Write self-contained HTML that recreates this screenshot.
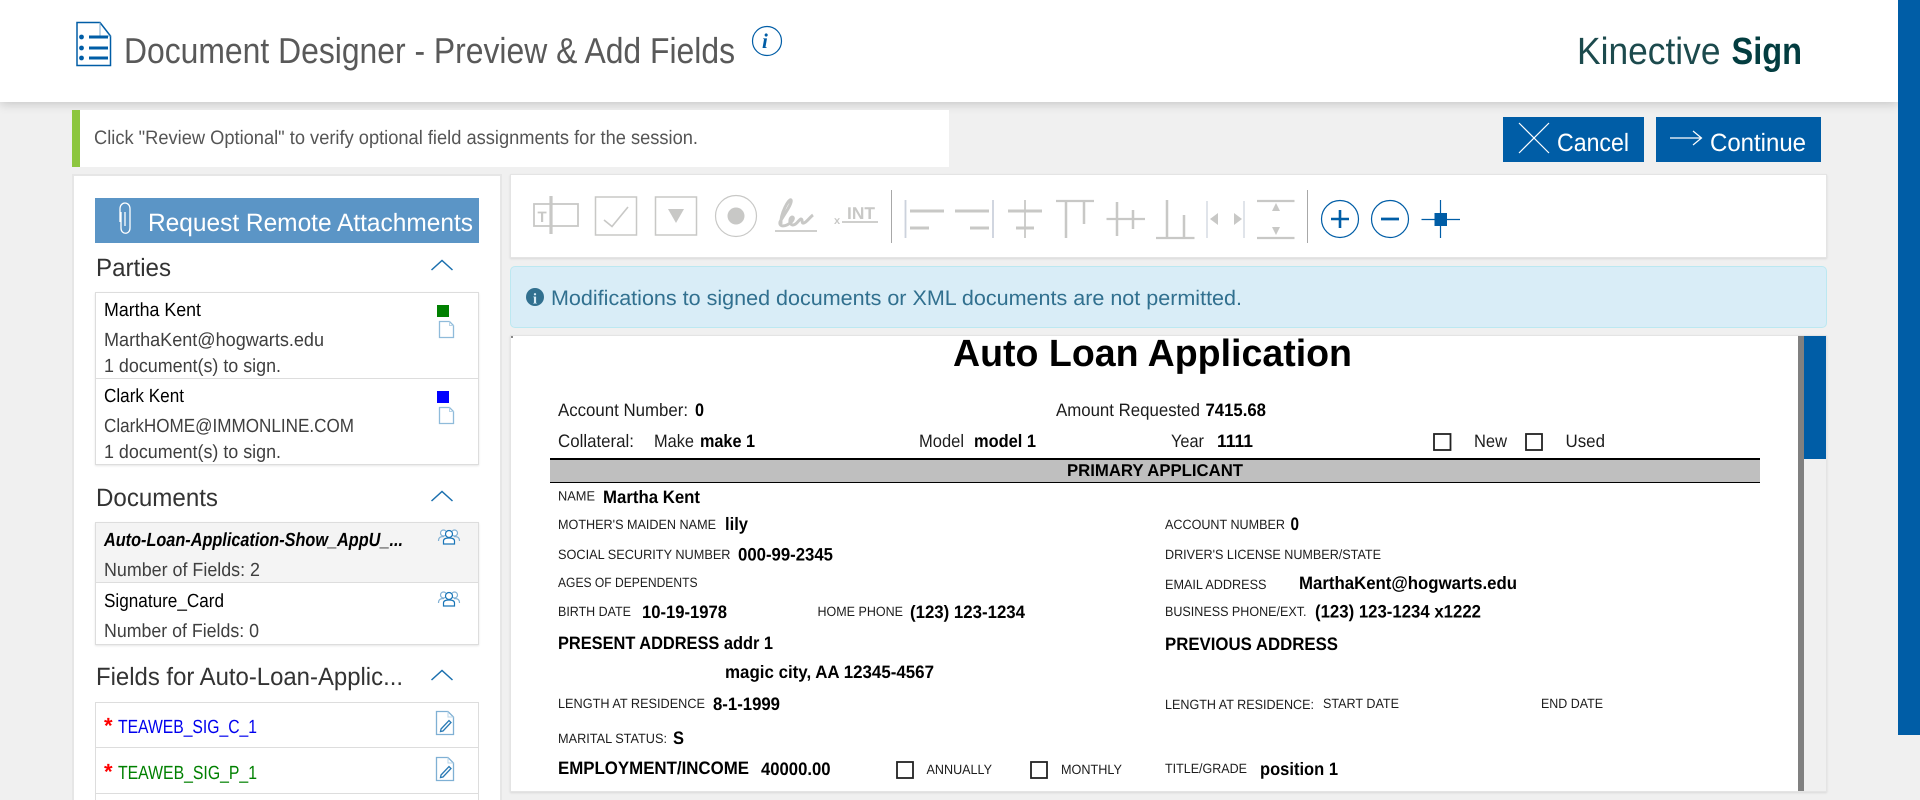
<!DOCTYPE html>
<html lang="en">
<head>
<meta charset="utf-8">
<title>Document Designer - Preview &amp; Add Fields</title>
<style>
html,body{margin:0;padding:0;width:1920px;height:800px;overflow:hidden;background:#f0f0f0;font-family:"Liberation Sans",sans-serif}
#page{position:relative;width:1920px;height:800px;overflow:hidden}
.b{position:absolute;box-sizing:border-box}
svg{position:absolute;left:0;top:0;text-rendering:geometricPrecision}
text{font-family:"Liberation Sans",sans-serif}
.r{font-size:19px;fill:#3f3f3f}
.n{font-size:19px;fill:#000}
.h{font-size:25px;fill:#333}
.l{font-size:18px;fill:#1c1c1c}
.v{font-size:18px;fill:#000;font-weight:bold}
.s{font-size:13.5px;fill:#1c1c1c}
.m{font-size:18px;fill:#000;font-weight:bold}
</style>
</head>
<body>
<div id="page">
<div class="b" style="left:0;top:0;width:1898px;height:102px;background:#fff;box-shadow:0 2px 10px rgba(0,0,0,.18)"></div>
<div class="b" style="left:1898px;top:0;width:22px;height:735px;background:#005da6"></div>
<div class="b" style="left:72px;top:110px;width:877px;height:57px;background:#fff;border-left:8px solid #8cc63f"></div>
<div class="b" style="left:1503px;top:117px;width:141px;height:45px;background:#005da6"></div>
<div class="b" style="left:1656px;top:117px;width:165px;height:45px;background:#005da6"></div>
<div class="b" style="left:72px;top:174px;width:430px;height:626px;background:#fff;border:2px solid #e6e6e6;border-bottom:0"></div>
<div class="b" style="left:95px;top:198px;width:384px;height:45px;background:#5b95c6"></div>
<div class="b" style="left:510px;top:174px;width:1317px;height:84px;background:#fff;border:1px solid #e4e4e4;box-shadow:0 1px 2px rgba(0,0,0,.1)"></div>
<div class="b" style="left:510px;top:266px;width:1317px;height:62px;background:#d9edf7;border:1px solid #bce8f1;border-radius:5px"></div>
<div class="b" style="left:510px;top:335px;width:1317px;height:457px;background:#fff;border:1px solid #e4e4e4;box-shadow:0 1px 2px rgba(0,0,0,.1)"></div>
<div class="b" style="left:1798px;top:336px;width:6px;height:455px;background:#808080"></div>
<div class="b" style="left:1804px;top:336px;width:22px;height:455px;background:#f0f0f0"></div>
<div class="b" style="left:1804px;top:336px;width:22px;height:123px;background:#005da6"></div>
<div class="b" style="left:511px;top:336px;width:2px;height:2px;background:#888"></div>
<div class="b" style="left:95px;top:292px;width:384px;height:173px;background:#fff;border:1.5px solid #ddd;box-shadow:0 1px 2px rgba(0,0,0,.1)"></div>
<div class="b" style="left:96px;top:378px;width:382px;height:1px;background:#ddd"></div>
<div class="b" style="left:95px;top:522px;width:384px;height:123px;background:#fff;border:1.5px solid #ddd;box-shadow:0 1px 2px rgba(0,0,0,.1)"></div>
<div class="b" style="left:96px;top:523px;width:382px;height:60px;background:#f4f4f4;border-bottom:1px solid #ddd"></div>
<div class="b" style="left:95px;top:702px;width:384px;height:98px;background:#fff;border:1.5px solid #ddd;border-bottom:0"></div>
<div class="b" style="left:96px;top:747px;width:382px;height:1px;background:#ddd"></div>
<div class="b" style="left:96px;top:793px;width:382px;height:1px;background:#ddd"></div>
<div class="b" style="left:437px;top:305px;width:12px;height:12px;background:#008000"></div>
<div class="b" style="left:437px;top:391px;width:12px;height:12px;background:#00f"></div>
<div class="b" style="left:550px;top:458px;width:1210px;height:25px;background:#bfbfbf;border-top:2px solid #000;border-bottom:1.5px solid #000"></div>

<svg width="1920" height="800" viewBox="0 0 1920 800" xmlns="http://www.w3.org/2000/svg">
<!-- header -->
<g fill="none" stroke="#005da6">
<path d="M77 22.500H100L110.500 36V65.500H77Z" stroke-width="1.500"/>
<path d="M100 22.500V36H110.500" stroke-width="1" stroke="#7aa9cf"/>
<path d="M89 37H108M89 48H108M89 58H108" stroke-width="3"/>
<circle cx="767" cy="41" r="14.500" stroke-width="1.200"/>
</g>
<g fill="#005da6"><circle cx="81.500" cy="37" r="2.400"/><circle cx="81.500" cy="48" r="2.400"/><circle cx="81.500" cy="58" r="2.400"/></g>
<text x="762" y="48" style="font-family:'Liberation Serif',serif;font-style:italic;font-weight:bold;font-size:21px" fill="#005da6">i</text>
<text x="124" y="63" font-size="36" fill="#595959" textLength="611" lengthAdjust="spacingAndGlyphs">Document Designer - Preview &amp; Add Fields</text>
<text x="1577" y="64" font-size="38" fill="#1c4a4d" textLength="143.500" lengthAdjust="spacingAndGlyphs">Kinective</text>
<text x="1731.500" y="64" font-size="38" font-weight="bold" fill="#033d40" textLength="70.500" lengthAdjust="spacingAndGlyphs">Sign</text>

<!-- notice and buttons -->
<text x="94" y="144" font-size="19.500" fill="#555" textLength="604" lengthAdjust="spacingAndGlyphs">Click "Review Optional" to verify optional field assignments for the session.</text>
<path d="M1519 123L1549 153M1549 123L1519 153" stroke="#fff" stroke-width="1.200" fill="none"/>
<text x="1557" y="151" font-size="25" fill="#fff" textLength="72" lengthAdjust="spacingAndGlyphs">Cancel</text>
<path d="M1670 138H1701M1693 131L1701.500 138L1693 145" stroke="#fff" stroke-width="1.200" fill="none"/>
<text x="1710" y="151" font-size="25" fill="#fff" textLength="96" lengthAdjust="spacingAndGlyphs">Continue</text>

<!-- left panel -->
<path d="M121 212V228C121 235 130 235 130 228V209C130 201 120 201 120 209V222M125 212V226" stroke="#fff" stroke-width="1.300" fill="none"/>
<text x="148" y="231" font-size="25" fill="#fff" textLength="325" lengthAdjust="spacingAndGlyphs">Request Remote Attachments</text>

<text class="h" x="96" y="276" textLength="75" lengthAdjust="spacingAndGlyphs">Parties</text>
<path d="M431.500 270L442 260.500L452.500 270" stroke="#1a6fae" stroke-width="1.500" fill="none"/>
<text class="n" x="104" y="316" textLength="97" lengthAdjust="spacingAndGlyphs">Martha Kent</text>
<text class="r" x="104" y="346" textLength="220" lengthAdjust="spacingAndGlyphs">MarthaKent@hogwarts.edu</text>
<text class="r" x="104" y="372" textLength="177" lengthAdjust="spacingAndGlyphs">1 document(s) to sign.</text>
<path d="M439.500 321.500H449.500L453.500 325.500V337.500H439.500Z" fill="#fff" stroke="#8fbbda" stroke-width="1.300"/>
<path d="M449.500 321.500V325.500H453.500" fill="none" stroke="#b8d4e8" stroke-width="1"/>
<text class="n" x="104" y="402" textLength="80" lengthAdjust="spacingAndGlyphs">Clark Kent</text>
<text class="r" x="104" y="432" textLength="250" lengthAdjust="spacingAndGlyphs">ClarkHOME@IMMONLINE.COM</text>
<text class="r" x="104" y="458" textLength="177" lengthAdjust="spacingAndGlyphs">1 document(s) to sign.</text>
<path d="M439.500 407.500H449.500L453.500 411.500V423.500H439.500Z" fill="#fff" stroke="#8fbbda" stroke-width="1.300"/>
<path d="M449.500 407.500V411.500H453.500" fill="none" stroke="#b8d4e8" stroke-width="1"/>

<text class="h" x="96" y="506" textLength="122" lengthAdjust="spacingAndGlyphs">Documents</text>
<path d="M431.500 501L442 491.500L452.500 501" stroke="#1a6fae" stroke-width="1.500" fill="none"/>
<text x="104" y="546" font-size="19" font-weight="bold" font-style="italic" fill="#000" textLength="299" lengthAdjust="spacingAndGlyphs">Auto-Loan-Application-Show_AppU_...</text>
<text class="r" x="104" y="576" textLength="156" lengthAdjust="spacingAndGlyphs">Number of Fields: 2</text>
<text class="n" x="104" y="607" textLength="120" lengthAdjust="spacingAndGlyphs">Signature_Card</text>
<text class="r" x="104" y="637" textLength="155" lengthAdjust="spacingAndGlyphs">Number of Fields: 0</text>
<g fill="#fff" stroke-width="1.200">
<g stroke="#7fb0d4"><circle cx="443.500" cy="533" r="3"/><circle cx="454.500" cy="533" r="3"/><path d="M438.500 541C438.500 537 441 536.500 444 536.500M459.500 541C459.500 537 457 536.500 454 536.500" fill="none"/></g>
<g stroke="#1a76b8"><circle cx="449" cy="534" r="3.500"/><path d="M443.500 544V541C443.500 538.500 446 538 449 538C452 538 454.500 538.500 454.500 541V544Z"/></g>
<g stroke="#7fb0d4"><circle cx="443.500" cy="595" r="3"/><circle cx="454.500" cy="595" r="3"/><path d="M438.500 603C438.500 599 441 598.500 444 598.500M459.500 603C459.500 599 457 598.500 454 598.500" fill="none"/></g>
<g stroke="#1a76b8"><circle cx="449" cy="596" r="3.500"/><path d="M443.500 606V603C443.500 600.500 446 600 449 600C452 600 454.500 600.500 454.500 603V606Z"/></g>
</g>

<text class="h" x="96" y="685" textLength="307" lengthAdjust="spacingAndGlyphs">Fields for Auto-Loan-Applic...</text>
<path d="M431.500 680L442 670.500L452.500 680" stroke="#1a6fae" stroke-width="1.500" fill="none"/>
<text x="104" y="733" font-size="22" font-weight="bold" fill="#f00">*</text>
<text x="118" y="733" font-size="19" fill="#0000ee" textLength="139" lengthAdjust="spacingAndGlyphs">TEAWEB_SIG_C_1</text>
<text x="104" y="779" font-size="22" font-weight="bold" fill="#f00">*</text>
<text x="118" y="779" font-size="19" fill="#008000" textLength="139" lengthAdjust="spacingAndGlyphs">TEAWEB_SIG_P_1</text>
<g fill="none">
<path d="M436.500 711.500H448L453.500 717V734.500H436.500Z" stroke="#7fb0d4" stroke-width="1.300"/><path d="M448 711.500V717H453.500" stroke="#b8d4e8"/>
<path d="M441 729L449 720.500L451 722.500L443 731L440.500 731.500Z" stroke="#2a7ab5" stroke-width="1.300"/>
<path d="M436.500 757.500H448L453.500 763V780.500H436.500Z" stroke="#7fb0d4" stroke-width="1.300"/><path d="M448 757.500V763H453.500" stroke="#b8d4e8"/>
<path d="M441 775L449 766.500L451 768.500L443 777L440.500 777.500Z" stroke="#2a7ab5" stroke-width="1.300"/>
</g>

<!-- toolbar -->
<g fill="none" stroke="#c8c8c6">
<rect x="534" y="204" width="44" height="22" stroke-width="1.800"/>
<path d="M551 196V234" stroke-width="3.200"/>
<rect x="595.500" y="197" width="41" height="38" stroke-width="1.500"/>
<path d="M604 220L612 226.500L628 207" stroke-width="1.600"/>
<rect x="655.500" y="197" width="41" height="38" stroke-width="1.500"/>
<circle cx="736" cy="216" r="20.500" stroke-width="1.200"/>
<path d="M781 224C780 214 789 198 791 200C793 203 783 216 780 222C779 227 785 227 790 223C794 220 794 217 792 217C789 218 789 225 793 225C797 225 799 219 801 219C803 219 801 224 804 223C807 222 810 217 813 215" stroke-width="3"/>
<path d="M775 231H817" stroke-width="1.800"/>
<path d="M842 222H878" stroke-width="1.800"/>
<path d="M905.500 200V238M993 200V238" stroke="#ccd2dc" stroke-width="1.800"/>
<path d="M910 211H944M910 228H929M955 211H989M970 228H989M1008 211H1042M1016 228H1034" stroke-width="3"/>
<path d="M1025 200V238" stroke-width="1.800"/>
<path d="M1056 201H1094M1106.500 219H1145M1156 238H1194.500M1257 201H1294.500M1257 238H1294.500" stroke-width="2.200"/>
<path d="M1066 201V238M1084 201V224M1117 202V236M1133 210V229M1167 200V238M1184 215V238" stroke-width="2.500"/>
<path d="M1207 201V238M1244 201V238" stroke="#ccd2dc" stroke-width="1.200"/>
</g>
<g fill="#c8c8c6">
<text x="537.500" y="222" font-size="15" font-weight="bold" fill="#c8c8c6">T</text>
<path d="M668 209H684L676 223Z"/>
<circle cx="736" cy="216" r="8.500"/>
<text x="834" y="224" font-size="11" font-weight="bold" fill="#c8c8c6">x</text>
<text x="847" y="219" font-size="17" font-weight="bold" fill="#c8c8c6" textLength="28" lengthAdjust="spacingAndGlyphs">INT</text>
<path d="M1218 213V225L1210 219ZM1234 213V225L1242 219ZM1276 203L1280 211H1272ZM1276 235L1280 227H1272Z"/>
</g>
<path d="M891.500 190V243M1307.500 190V243" stroke="#a8a8a8" stroke-width="1"/>
<g fill="none" stroke="#005da6">
<ellipse cx="1340" cy="219" rx="18.500" ry="18.500" stroke-width="1.200"/>
<path d="M1331 219H1349M1340 210V228" stroke-width="2.600"/>
<ellipse cx="1390" cy="219" rx="18.500" ry="18.500" stroke-width="1.200"/>
<path d="M1381 219H1399" stroke-width="2.800"/>
<path d="M1421.500 219.500H1460M1440.500 200V238" stroke-width="1.200"/>
</g>
<rect x="1434.500" y="213" width="12.500" height="13" fill="#005da6"/>

<!-- alert -->
<circle cx="535" cy="297" r="9" fill="#31708f"/>
<text x="535" y="303.500" text-anchor="middle" font-size="15" font-weight="bold" fill="#d9edf7" style="font-family:'Liberation Serif',serif">i</text>
<text x="551" y="305" font-size="21" fill="#31708f" textLength="691" lengthAdjust="spacingAndGlyphs">Modifications to signed documents or XML documents are not permitted.</text>

<!-- document -->
<text x="953" y="366" font-size="38" font-weight="bold" fill="#000" textLength="399" lengthAdjust="spacingAndGlyphs">Auto Loan Application</text>
<text class="l" x="558" y="416" textLength="130" lengthAdjust="spacingAndGlyphs">Account Number:</text>
<text class="v" x="695" y="416" textLength="9" lengthAdjust="spacingAndGlyphs">0</text>
<text class="l" x="1056" y="416" textLength="144" lengthAdjust="spacingAndGlyphs">Amount Requested</text>
<text class="v" x="1205.500" y="416" textLength="60.500" lengthAdjust="spacingAndGlyphs">7415.68</text>
<text class="l" x="558" y="447" textLength="76" lengthAdjust="spacingAndGlyphs">Collateral:</text>
<text class="l" x="654" y="447" textLength="40" lengthAdjust="spacingAndGlyphs">Make</text>
<text class="v" x="700" y="447" textLength="55" lengthAdjust="spacingAndGlyphs">make 1</text>
<text class="l" x="919" y="447" textLength="45" lengthAdjust="spacingAndGlyphs">Model</text>
<text class="v" x="974" y="447" textLength="62" lengthAdjust="spacingAndGlyphs">model 1</text>
<text class="l" x="1171" y="447" textLength="33" lengthAdjust="spacingAndGlyphs">Year</text>
<text class="v" x="1217" y="447" textLength="36" lengthAdjust="spacingAndGlyphs">1111</text>
<rect x="1434" y="434" width="16.500" height="16" fill="none" stroke="#222" stroke-width="1.800"/>
<text class="l" x="1474" y="447" textLength="33" lengthAdjust="spacingAndGlyphs">New</text>
<rect x="1526" y="434" width="16" height="16" fill="none" stroke="#222" stroke-width="1.800"/>
<text class="l" x="1565.500" y="447" textLength="39.500" lengthAdjust="spacingAndGlyphs">Used</text>
<text x="1067" y="476" font-size="17" font-weight="bold" fill="#000" textLength="176" lengthAdjust="spacingAndGlyphs">PRIMARY APPLICANT</text>

<text class="s" x="558" y="500.500" textLength="37" lengthAdjust="spacingAndGlyphs">NAME</text>
<text class="v" x="603" y="503" textLength="97" lengthAdjust="spacingAndGlyphs">Martha Kent</text>
<text class="s" x="558" y="529" textLength="158" lengthAdjust="spacingAndGlyphs">MOTHER'S MAIDEN NAME</text>
<text class="v" x="725" y="530" textLength="23" lengthAdjust="spacingAndGlyphs">lily</text>
<text class="s" x="1165" y="529" textLength="120" lengthAdjust="spacingAndGlyphs">ACCOUNT NUMBER</text>
<text class="v" x="1290.500" y="530" textLength="8.500" lengthAdjust="spacingAndGlyphs">0</text>
<text class="s" x="558" y="559" textLength="172.500" lengthAdjust="spacingAndGlyphs">SOCIAL SECURITY NUMBER</text>
<text class="v" x="738" y="560.500" textLength="95" lengthAdjust="spacingAndGlyphs">000-99-2345</text>
<text class="s" x="1165" y="559" textLength="216" lengthAdjust="spacingAndGlyphs">DRIVER'S LICENSE NUMBER/STATE</text>
<text class="s" x="558" y="587" textLength="139.500" lengthAdjust="spacingAndGlyphs">AGES OF DEPENDENTS</text>
<text class="s" x="1165" y="589" textLength="101.500" lengthAdjust="spacingAndGlyphs">EMAIL ADDRESS</text>
<text class="v" x="1299" y="589" textLength="218" lengthAdjust="spacingAndGlyphs">MarthaKent@hogwarts.edu</text>
<text class="s" x="558" y="616" textLength="73" lengthAdjust="spacingAndGlyphs">BIRTH DATE</text>
<text class="v" x="642" y="618" textLength="85" lengthAdjust="spacingAndGlyphs">10-19-1978</text>
<text class="s" x="817.500" y="616" textLength="85.500" lengthAdjust="spacingAndGlyphs">HOME PHONE</text>
<text class="v" x="910" y="618" textLength="115" lengthAdjust="spacingAndGlyphs">(123) 123-1234</text>
<text class="s" x="1165" y="616" textLength="141.500" lengthAdjust="spacingAndGlyphs">BUSINESS PHONE/EXT.</text>
<text class="v" x="1315" y="617.500" textLength="166" lengthAdjust="spacingAndGlyphs">(123) 123-1234 x1222</text>
<text class="m" x="558" y="649" textLength="215" lengthAdjust="spacingAndGlyphs">PRESENT ADDRESS addr 1</text>
<text class="m" x="1165" y="650" textLength="173" lengthAdjust="spacingAndGlyphs">PREVIOUS ADDRESS</text>
<text class="v" x="725" y="678" textLength="209" lengthAdjust="spacingAndGlyphs">magic city, AA 12345-4567</text>
<text class="s" x="558" y="708" textLength="147" lengthAdjust="spacingAndGlyphs">LENGTH AT RESIDENCE</text>
<text class="v" x="713" y="710" textLength="67" lengthAdjust="spacingAndGlyphs">8-1-1999</text>
<text class="s" x="1165" y="709" textLength="149" lengthAdjust="spacingAndGlyphs">LENGTH AT RESIDENCE:</text>
<text class="s" x="1323" y="708" textLength="76" lengthAdjust="spacingAndGlyphs">START DATE</text>
<text class="s" x="1541" y="708" textLength="62" lengthAdjust="spacingAndGlyphs">END DATE</text>
<text class="s" x="558" y="743" textLength="109" lengthAdjust="spacingAndGlyphs">MARITAL STATUS:</text>
<text class="v" x="673" y="744" textLength="11" lengthAdjust="spacingAndGlyphs">S</text>
<text class="m" x="558" y="774" textLength="191" lengthAdjust="spacingAndGlyphs">EMPLOYMENT/INCOME</text>
<text class="v" x="761" y="775" textLength="69.500" lengthAdjust="spacingAndGlyphs">40000.00</text>
<rect x="897" y="762" width="16" height="16" fill="none" stroke="#222" stroke-width="1.800"/>
<text class="s" x="926.500" y="774" textLength="65.500" lengthAdjust="spacingAndGlyphs">ANNUALLY</text>
<rect x="1031" y="762" width="16" height="16" fill="none" stroke="#222" stroke-width="1.800"/>
<text class="s" x="1061" y="774" textLength="61" lengthAdjust="spacingAndGlyphs">MONTHLY</text>
<text class="s" x="1165" y="773" textLength="82" lengthAdjust="spacingAndGlyphs">TITLE/GRADE</text>
<text class="v" x="1260" y="775" textLength="78" lengthAdjust="spacingAndGlyphs">position 1</text>
</svg>
</div>
</body>
</html>
